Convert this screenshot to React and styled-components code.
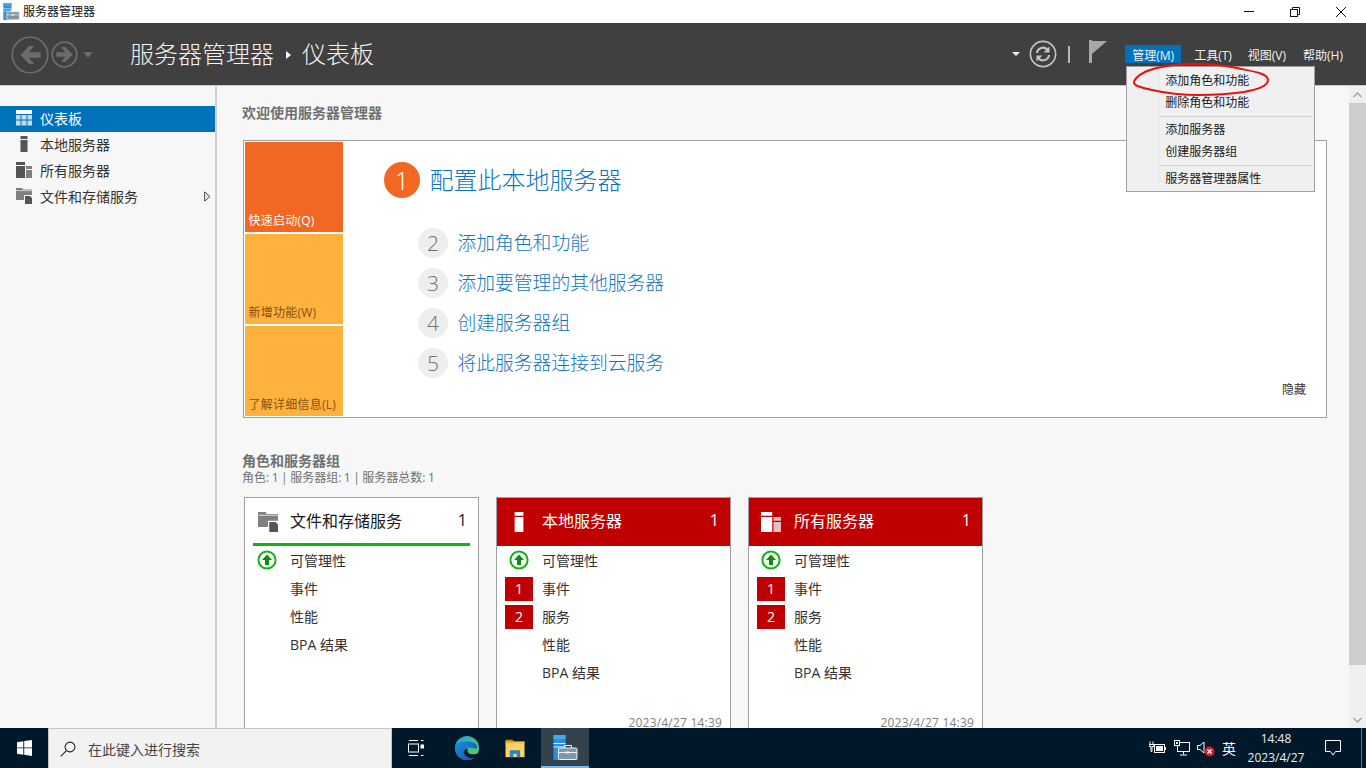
import React from 'react'
import styled, { createGlobalStyle } from 'styled-components'

const fontStack = '"Open Sans", "Noto Sans CJK SC", sans-serif'

const GlobalStyle = createGlobalStyle`
  html, body { margin: 0; padding: 0; background: #f7f7f7; }
  * { box-sizing: border-box; }
  body { font-family: ${fontStack}; font-size: 14px; overflow: hidden; }
`

const Screen = styled.div`
  width: 1366px;
  height: 768px;
  display: flex;
  flex-direction: column;
  overflow: hidden;
`

/* title bar */
const TitleBar = styled.div`
  height: 23px;
  flex: none;
  background: #fff;
  display: flex;
  align-items: center;
  padding-left: 3px;
  font-size: 12px;
  color: #111;
`
const TitleText = styled.span`
  margin-left: 3px;
  margin-top: -1px;
`
const WinButtons = styled.div`
  margin-left: auto;
  display: flex;
  margin-right: 2px;
`
const WinButton = styled.div`
  width: 46px;
  height: 23px;
  display: flex;
  align-items: center;
  justify-content: center;
`

/* dark header */
const Header = styled.div`
  height: 63px;
  flex: none;
  background: #404040;
  border-bottom: 1px solid #c8c8c8;
  display: flex;
  align-items: center;
  color: #fff;
  position: relative;
  z-index: 5;
`
const NavIcons = styled.div`
  display: flex;
  align-items: center;
  margin-left: 11px;
  width: 119px;
  margin-top: 1px;
`
const Crumb = styled.div`
  display: flex;
  align-items: center;
  font-size: 24px;
  font-weight: 300;
  line-height: 32px;
  color: #f4f4f4;
`
const CrumbArrow = styled.span`
  width: 0;
  height: 0;
  margin: 2px 11px 0 12px;
  border-left: 5px solid #fff;
  border-top: 4px solid transparent;
  border-bottom: 4px solid transparent;
`
const Tools = styled.div`
  margin-left: auto;
  display: flex;
  align-items: center;
`
const SmallCaret = styled.span`
  width: 0;
  height: 0;
  margin-right: 9px;
  border-top: 4px solid #eee;
  border-left: 4px solid transparent;
  border-right: 4px solid transparent;
`
const Divider = styled.span`
  width: 2px;
  height: 17px;
  background: #b8b8b8;
  margin: 0 19px 0 11px;
`
const MenuBar = styled.div`
  display: flex;
  margin: 0 17px 0 18px;
  position: relative;
`
const MenuItem = styled.div`
  height: 18px;
  line-height: 22px;
  padding: 0 ${p => (p.$active ? 7 : 6)}px;
  font-size: 12px;
  margin-right: ${p => p.$gap}px;
  white-space: nowrap;
  color: #f2f2f2;
  background: ${p => (p.$active ? '#0072bc' : 'transparent')};
`

/* dropdown menu over the page */
const Dropdown = styled.div`
  position: absolute;
  left: 1px;
  top: 21px;
  width: 189px;
  height: 126px;
  background: #f0f0f0;
  border: 1px solid #a0a0a0;
  padding: 3px 2px 2px 0;
  color: #222;
  font-size: 12px;
  z-index: 10;
`
const GutterLine = styled.div`
  position: absolute;
  left: 31px;
  top: 2px;
  bottom: 8px;
  width: 1px;
  background: #e2e2e2;
`
const DropItem = styled.div`
  height: 22px;
  line-height: 22px;
  padding-left: 38px;
  color: #1a1a1a;
`
const DropSep = styled.div`
  height: 1px;
  margin: 2px 0 2px 33px;
  background: #d4d4d4;
`
const Scribble = styled.svg`
  position: absolute;
  left: 5px;
  top: -5px;
  width: 140px;
  height: 36px;
  overflow: visible;
`

/* body */
const Body = styled.div`
  flex: 1;
  display: flex;
  min-height: 0;
`
const Sidebar = styled.nav`
  width: 217px;
  flex: none;
  background: #f7f7f7;
  border-right: 2px solid #d2d2d2;
  padding-top: 20px;
`
const SideItem = styled.div`
  height: 26px;
  display: flex;
  align-items: center;
  padding: 0 0 2px 16px;
  font-size: 14px;
  color: ${p => (p.$active ? '#fff' : '#333')};
  background: ${p => (p.$active ? '#0072bc' : 'transparent')};
  > svg:first-child { flex: none; margin-right: 8px; }
`
const SideCaret = styled.svg`
  margin-left: auto;
  margin-right: 4px;
`

const Main = styled.main`
  flex: 1;
  min-width: 0;
  background: #f7f7f7;
  padding: 18px 0 0 25px;
  overflow: hidden;
`
const SectionHead = styled.h2`
  margin: ${p => p.$top || 0}px 0 0;
  font-size: 14px;
  line-height: 18px;
  font-weight: 700;
  color: #707070;
`
const SectionSub = styled.div`
  font-size: 12px;
  line-height: 16px;
  word-spacing: -0.6px;
  color: #707070;
`

const Panel = styled.section`
  width: 1084px;
  height: 278px;
  margin: 18px 0 0 1px;
  padding: 1px;
  background: #fff;
  border: 1px solid #a0a0a0;
  display: flex;
`
const TileColumn = styled.div`
  width: 98px;
  flex: none;
  display: flex;
  flex-direction: column;
  gap: 2px;
`
const Tile = styled.div`
  height: 90px;
  background: ${p => (p.$primary ? '#f26722' : '#ffb13d')};
  color: ${p => (p.$primary ? '#fff' : '#8a4f10')};
  font-size: 12px;
  letter-spacing: 0.25px;
  display: flex;
  align-items: flex-end;
  padding: 0 0 3px 3.5px;
  line-height: 16px;
  white-space: nowrap;
`
const Steps = styled.div`
  flex: 1;
  padding: 19px 0 0 41px;
`
const LeadStep = styled.div`
  display: flex;
  align-items: center;
  margin-bottom: 30px;
  color: #0f76bc;
  font-size: 24px;
  font-weight: 300;
`
const StepNum = styled.span`
  flex: none;
  width: ${p => (p.$lead ? 36 : 30)}px;
  height: ${p => (p.$lead ? 36 : 30)}px;
  border-radius: 50%;
  margin-right: 9.5px;
  display: flex;
  align-items: center;
  justify-content: center;
  font-size: ${p => (p.$lead ? 26 : 21)}px;
  font-weight: 300;
  color: ${p => (p.$lead ? '#fff' : '#707070')};
  background: ${p => (p.$lead ? '#f26722' : '#eeeeee')};
`
const SubStep = styled.div`
  display: flex;
  align-items: center;
  height: 30px;
  margin: 0 0 10px 34px;
  font-size: 18.8px;
  font-weight: 300;
  color: #0f76bc;
`
const StepLabel = styled.span`
  margin-bottom: 2px;
`
const HideLink = styled.div`
  align-self: flex-end;
  margin: 0 19px 18px 0;
  font-size: 12px;
  line-height: 16px;
  color: #333;
`

/* role cards */
const CardRow = styled.div`
  display: flex;
  gap: 17px;
  margin: 11px 0 0 2px;
`
const Card = styled.article`
  width: 235px;
  height: 250px;
  flex: none;
  background: #fff;
  border: 1px solid #a0a0a0;
`
const CardHead = styled.div`
  height: 48px;
  display: flex;
  align-items: center;
  font-size: 16px;
  padding: ${p => (p.$alert ? '0 11px 2px 45px' : '0 3px 2px 37px')};
  margin: ${p => (p.$alert ? '0' : '0 8px')};
  color: ${p => (p.$alert ? '#fff' : '#1a1a1a')};
  background: ${p => (p.$alert ? '#c00000' : '#fff')};
  border-bottom: 3px solid ${p => (p.$alert ? '#c00000' : '#0fb50f')};
  position: relative;
  svg { position: absolute; left: ${p => (p.$alert ? 12 : 5)}px; top: 14px; }
`
const CardCount = styled.span`
  margin-left: auto;
`
const CardRows = styled.div`
  padding: 3px 0 0 8px;
  display: flex;
  flex-direction: column;
  gap: 4px;
`
const StatusRow = styled.div`
  height: 24px;
  display: flex;
  align-items: center;
  padding-bottom: 2px;
  font-size: 14px;
  color: #333;
`
const Slot = styled.span`
  flex: none;
  width: 28px;
  height: 24px;
  margin: 2px 9px 0 0;
  padding-bottom: 2px;
  display: flex;
  align-items: center;
  justify-content: center;
  font-size: 14px;
  color: #fff;
  background: ${p => (p.$badge ? '#c00000' : 'transparent')};
`
const Stamp = styled.div`
  margin-top: 26px;
  padding-right: 8px;
  text-align: right;
  font-size: 12px;
  line-height: 16px;
  letter-spacing: 0.2px;
  color: #808080;
`

/* scrollbar */
const ScrollBar = styled.div`
  width: 17px;
  flex: none;
  background: #f0f0f0;
  display: flex;
  flex-direction: column;
`
const ScrollEnd = styled.div`
  height: 17px;
  flex: none;
  display: flex;
  align-items: center;
  justify-content: center;
  margin-top: ${p => (p.$bottom ? 'auto' : 0)};
`
const ScrollThumb = styled.div`
  height: 562px;
  background: #cdcdcd;
`

/* taskbar */
const Taskbar = styled.footer`
  height: 40px;
  flex: none;
  background: #00182a;
  display: flex;
  color: #fff;
`
const StartButton = styled.div`
  width: 48px;
  display: flex;
  align-items: center;
  justify-content: center;
`
const SearchBox = styled.div`
  width: 344px;
  background: #f2f2f2;
  border: 1px solid #c4c4c4;
  border-bottom: none;
  display: flex;
  align-items: center;
  padding-left: 11px;
  font-size: 14px;
  color: #444;
  svg { margin-right: 12px; }
`
const TaskButton = styled.div`
  width: 48px;
  margin-left: ${p => p.$ml || 0}px;
  display: flex;
  align-items: center;
  justify-content: center;
  background: ${p => (p.$active ? '#33434d' : 'transparent')};
  border-bottom: ${p => (p.$active ? '2px solid #76b9ed' : 'none')};
`
const Tray = styled.div`
  margin-left: auto;
  display: flex;
  align-items: center;
`
const TrayIcon = styled.span`
  width: 24px;
  height: 40px;
  display: flex;
  align-items: center;
  justify-content: center;
`
const Ime = styled.span`
  width: 22px;
  text-align: center;
  font-size: 14px;
  margin-right: 6px;
`
const Clock = styled.div`
  width: 60px;
  text-align: center;
  font-size: 12px;
  line-height: 19px;
  color: #eee;
  white-space: nowrap;
`
const Notify = styled.div`
  width: 47px;
  margin-left: 8px;
  height: 40px;
  padding-right: 9px;
  display: flex;
  align-items: center;
  justify-content: center;
`
const ShowDesktop = styled.div`
  width: 5px;
  height: 40px;
  border-left: 1px solid #6b7680;
`

/* drawings */
const DashIcon = () => (
  <svg width="16" height="16" viewBox="0 0 16 16">
    <rect x="0" y="0" width="16" height="4" fill="#fff" />
    <g fill="#bfdcf0">
      <rect x="0" y="5" width="4.5" height="4.5" />
      <rect x="5.5" y="5" width="5" height="4.5" />
      <rect x="11.5" y="5" width="4.5" height="4.5" />
      <rect x="0" y="10.5" width="4.5" height="5" />
      <rect x="5.5" y="10.5" width="5" height="5" />
      <rect x="11.5" y="10.5" width="4.5" height="5" />
    </g>
  </svg>
)
const TowerIcon = ({ color = '#555', size = 16 }) => (
  <svg width={size} height={size} viewBox="0 0 16 16">
    <rect x="4.5" y="0" width="7" height="3" fill={color} />
    <rect x="4.5" y="4" width="7" height="12" fill={color} />
  </svg>
)
const TowersIcon = ({ color = '#555', second = '#808080', size = 16 }) => (
  <svg width={size} height={size} viewBox="0 0 16 16">
    <rect x="0" y="0" width="9" height="3" fill={color} />
    <rect x="0" y="4" width="9" height="12" fill={color} />
    <rect x="10" y="4" width="6" height="3" fill={second} />
    <rect x="10" y="8" width="6" height="8" fill={second} />
  </svg>
)
const FilesIcon = ({ size = 16 }) => (
  <svg width={size} height={size} viewBox="0 0 16 16">
    <path d="M0 0h6l1 1.500h9V7H8v5H0z" fill="#808080" />
    <path d="M0 2.600h16" stroke="#fff" strokeWidth=".6" />
    <path d="M9 8h5l2 2v6H9z" fill="#555" />
  </svg>
)
const ManageIcon = ({ size = 16 }) => (
  <svg width={size} height={size} viewBox="0 0 24 25">
    <rect x="0" y="0" width="12" height="25" fill="#2b8fdc" />
    <rect x="0" y="0" width="12" height="4" fill="#45a8ec" />
    <path d="M0 8.500h12M0 12h12" stroke="#d7ecfb" strokeWidth="1" />
    <rect x="5" y="13" width="18.500" height="11.500" rx="1" fill="#7f95a8" stroke="#e8eef2" strokeWidth="1" />
    <path d="M11 13v-2.500h7V13" fill="none" stroke="#e8eef2" strokeWidth="1" />
    <path d="M5 17.500h18.500" stroke="#e8eef2" strokeWidth="1" />
    <rect x="12" y="16.500" width="4" height="2" fill="#e8eef2" />
  </svg>
)
const UpArrowIcon = () => (
  <svg width="20" height="20" viewBox="0 0 20 20">
    <circle cx="10" cy="10" r="8.600" fill="none" stroke="#0fb50f" strokeWidth="2" />
    <path d="M10 4.500 15 10h-3v5H8v-5H5z" fill="#0a8f0a" />
  </svg>
)
const BackIcon = ({ size }) => (
  <svg width={size} height={size} viewBox="0 0 36 36">
    <circle cx="18" cy="18" r="16.800" fill="none" stroke="#6c6c6c" strokeWidth={size > 30 ? 1.6 : 2.2} />
    <path d="M28 15.500H17l5-6h-5l-8 8.500 8 8.500h5l-5-6h11z" fill="#6c6c6c" />
  </svg>
)
const ForwardIcon = ({ size }) => (
  <svg width={size} height={size} viewBox="0 0 36 36">
    <circle cx="18" cy="18" r="16.400" fill="none" stroke="#6c6c6c" strokeWidth="2.400" />
    <path d="M7 15h12l-5.500-7h5.500L29 18 19 28h-5.500L19 21H7z" fill="#6c6c6c" />
  </svg>
)
const RefreshIcon = () => (
  <svg width="28" height="28" viewBox="0 0 28 28" fill="none">
    <circle cx="14" cy="14" r="12.600" stroke="#c4c4c4" strokeWidth="1.600" />
    <path d="M8 13a6 6 0 0 1 10.400-3.400" stroke="#c4c4c4" strokeWidth="2.200" />
    <path d="M20 15a6 6 0 0 1-10.400 3.400" stroke="#c4c4c4" strokeWidth="2.200" />
    <path d="M20.500 6.500v6h-6z" fill="#c4c4c4" />
    <path d="M7.500 21.500v-6h6z" fill="#c4c4c4" />
  </svg>
)
const FlagIcon = () => (
  <svg width="18" height="23" viewBox="0 0 18 23" style={{ marginTop: -5 }}>
    <rect x="0" y="0" width="3" height="23" fill="#a8a8a8" />
    <path d="M3 1h15L3 14z" fill="#a8a8a8" />
  </svg>
)
const WinLogo = () => (
  <svg width="15" height="16" viewBox="0 0 15 16" fill="#fff">
    <path d="M0 2.200 6.300 1.200V7.400H0zM7.200 1.100 15 0V7.400H7.200zM0 8.300h6.300v6.400L0 13.700zM7.200 8.300H15V16l-7.800-1.200z" />
  </svg>
)
const SearchIcon = () => (
  <svg width="16" height="16" viewBox="0 0 16 16" fill="none" stroke="#222" strokeWidth="1.100">
    <circle cx="10" cy="6" r="4.900" />
    <path d="M6.400 9.600.8 15.400" />
  </svg>
)
const TaskViewIcon = () => (
  <svg width="16" height="16" viewBox="0 0 16 16" fill="none" stroke="#fff" strokeWidth="1">
    <path d="M1 .5h9M1 15.500h9" />
    <rect x=".5" y="4" width="10" height="8" />
    <path d="M13 .5h2.500M13 15.500h2.500" />
    <rect x="13" y="5" width="2.500" height="3" fill="#fff" />
  </svg>
)
const EdgeIcon = () => (
  <svg width="26" height="26" viewBox="0 0 26 26">
    <defs>
      <linearGradient id="edgeTop" x1="0" y1="0" x2="1" y2="1">
        <stop offset="0" stopColor="#1aa0dc" />
        <stop offset="1" stopColor="#5ed65a" />
      </linearGradient>
      <linearGradient id="edgeLow" x1="0" y1="0" x2="1" y2="1">
        <stop offset="0" stopColor="#1e8fe0" />
        <stop offset="1" stopColor="#0f4fa8" />
      </linearGradient>
    </defs>
    <circle cx="13" cy="13" r="12" fill="url(#edgeTop)" />
    <path d="M1 13C1 20 6.500 25 13 25c3 0 5.400-.9 7.400-2.300-4.800 1.400-10.400-1-10.400-5.700 0-2.600 2.200-4.600 5-4.600 2.600 0 5 1.200 6.500 1.200 1.200 0 2-.6 2-1.600C23 9 19 6.600 14 6.600 7 6.600 1 8 1 13z" fill="url(#edgeLow)" />
    <path d="M10 17c0 3.600 3.400 6 7 6 1.200 0 2.400-.2 3.400-.3 2-1.400 3.300-3.200 4-5-2 1.400-5.400 2-8 1.200-3-.9-3.800-3.200-2.200-5.300-2.600.2-4.200 1.600-4.200 3.400z" fill="#00182a" />
  </svg>
)
const ExplorerIcon = () => (
  <svg width="22" height="19" viewBox="0 0 24 22">
    <path d="M1 1h8l2 2H1z" fill="#c98a14" />
    <rect x="1" y="3" width="22" height="18" fill="#ffd45e" />
    <rect x="1" y="3" width="22" height="2" fill="#f2b93c" />
    <path d="M6 21v-8h12v8h-4v-4h-4v4z" fill="#2f7fc4" />
  </svg>
)
const PlugBatteryIcon = () => (
  <svg width="18" height="14" viewBox="0 0 18 14" fill="none" stroke="#fff">
    <rect x="5.500" y="3.500" width="10" height="8" />
    <rect x="7" y="5" width="7" height="5" fill="#fff" stroke="none" />
    <path d="M16.500 6v3" />
    <path d="M1 .5v3M4 .5v3M0 3.500h5v2H3v5H2v-5H0z" />
  </svg>
)
const NetworkIcon = () => (
  <svg width="16" height="16" viewBox="0 0 16 16" fill="none" stroke="#fff">
    <rect x="3.500" y="2.500" width="12" height="9" />
    <path d="M9.500 11.500v3M6 15h7" />
    <rect x=".5" y=".5" width="5" height="5" fill="#00182a" />
    <rect x="2" y="2" width="2" height="2" fill="#fff" stroke="none" />
  </svg>
)
const MutedIcon = () => (
  <svg width="18" height="18" viewBox="0 0 18 18" fill="none">
    <path d="M.5 6.500h2.500L7 3v11L3 10.500H.5z" stroke="#fff" />
    <circle cx="12.500" cy="12.500" r="5" fill="#e81123" />
    <path d="m10.500 10.500 4 4m0-4-4 4" stroke="#fff" strokeWidth="1.500" />
  </svg>
)
const BubbleIcon = () => (
  <svg width="16" height="16" viewBox="0 0 16 16" fill="none" stroke="#fff">
    <path d="M.5.500h15v11h-5L8 15l-2.500-3.500h-5z" />
  </svg>
)
const Chevron = ({ down }) => (
  <svg width="9" height="6" viewBox="0 0 9 6" fill="none" stroke="#a6a6a6" strokeWidth="1.500">
    <path d={down ? 'M.5 1 4.500 5l4-4' : 'M.5 5 4.500 1l4 4'} />
  </svg>
)

const AlertRows = () => (
  <CardRows>
    <StatusRow><Slot><UpArrowIcon /></Slot>可管理性</StatusRow>
    <StatusRow><Slot $badge>1</Slot>事件</StatusRow>
    <StatusRow><Slot $badge>2</Slot>服务</StatusRow>
    <StatusRow><Slot />性能</StatusRow>
    <StatusRow><Slot />BPA 结果</StatusRow>
    <Stamp>2023/4/27 14:39</Stamp>
  </CardRows>
)

const App = () => {
  const steps = [
    [2, '添加角色和功能'],
    [3, '添加要管理的其他服务器'],
    [4, '创建服务器组'],
    [5, '将此服务器连接到云服务'],
  ]

  return (
    <Screen>
      <GlobalStyle />
      <TitleBar>
        <ManageIcon size={17} />
        <TitleText>服务器管理器</TitleText>
        <WinButtons>
          <WinButton>
            <svg width="10" height="10" viewBox="0 0 10 10"><path d="M0 4.500h10" stroke="#111" /></svg>
          </WinButton>
          <WinButton>
            <svg width="10" height="10" viewBox="0 0 10 10" fill="none" stroke="#111">
              <rect x=".5" y="2.500" width="7" height="7" />
              <path d="M2.500 2.500v-2h7v7h-2" />
            </svg>
          </WinButton>
          <WinButton>
            <svg width="10" height="10" viewBox="0 0 10 10"><path d="m0 0 10 10M10 0 0 10" stroke="#111" /></svg>
          </WinButton>
        </WinButtons>
      </TitleBar>

      <Header>
        <NavIcons>
          <BackIcon size={38} />
          <span style={{ width: 2 }} />
          <ForwardIcon size={27} />
          <svg width="10" height="6" viewBox="0 0 10 6" style={{ marginLeft: 5 }}><path d="M0 0h10L5 6z" fill="#6c6c6c" /></svg>
        </NavIcons>
        <Crumb>
          服务器管理器
          <CrumbArrow />
          仪表板
        </Crumb>
        <Tools>
          <SmallCaret />
          <RefreshIcon />
          <Divider />
          <FlagIcon />
          <MenuBar>
            <MenuItem $active $gap={7}>管理(M)</MenuItem>
            <MenuItem $gap={4}>工具(T)</MenuItem>
            <MenuItem $gap={5}>视图(V)</MenuItem>
            <MenuItem $gap={0}>帮助(H)</MenuItem>
            <Dropdown>
              <GutterLine />
              <DropItem>添加角色和功能</DropItem>
              <DropItem>删除角色和功能</DropItem>
              <DropSep />
              <DropItem>添加服务器</DropItem>
              <DropItem>创建服务器组</DropItem>
              <DropSep />
              <DropItem>服务器管理器属性</DropItem>
              <Scribble viewBox="0 0 140 36" fill="none">
                <path
                  d="M25 6C38 3 48 2 60 2c18 0 32 1 45 4 13 3 31 5 31 12 0 6-9 9-24 12-14 2-32 3-45 3-14 0-34-2-47-5-8-2-18-4-18-7 0-4 5-8 11-11 4-2 8-3 12-4z"
                  stroke="#e81010"
                  strokeWidth="2"
                />
              </Scribble>
            </Dropdown>
          </MenuBar>
        </Tools>
      </Header>

      <Body>
        <Sidebar>
          <SideItem $active><DashIcon />仪表板</SideItem>
          <SideItem><TowerIcon />本地服务器</SideItem>
          <SideItem><TowersIcon />所有服务器</SideItem>
          <SideItem>
            <FilesIcon />文件和存储服务
            <SideCaret width="7" height="11" viewBox="0 0 7 11">
              <path d="M.7.9v9.200L6 5.500z" fill="#f7f7f7" stroke="#444" />
            </SideCaret>
          </SideItem>
        </Sidebar>

        <Main>
          <SectionHead>欢迎使用服务器管理器</SectionHead>
          <Panel>
            <TileColumn>
              <Tile $primary>快速启动(Q)</Tile>
              <Tile>新增功能(W)</Tile>
              <Tile>了解详细信息(L)</Tile>
            </TileColumn>
            <Steps>
              <LeadStep><StepNum $lead>1</StepNum><StepLabel>配置此本地服务器</StepLabel></LeadStep>
              {steps.map(([n, label]) => (
                <SubStep key={n}><StepNum>{n}</StepNum><StepLabel>{label}</StepLabel></SubStep>
              ))}
            </Steps>
            <HideLink>隐藏</HideLink>
          </Panel>

          <SectionHead $top={34}>角色和服务器组</SectionHead>
          <SectionSub>角色: 1 | 服务器组: 1 | 服务器总数: 1</SectionSub>

          <CardRow>
            <Card>
              <CardHead>
                <FilesIcon size={20} />
                文件和存储服务
                <CardCount>1</CardCount>
              </CardHead>
              <CardRows>
                <StatusRow><Slot><UpArrowIcon /></Slot>可管理性</StatusRow>
                <StatusRow><Slot />事件</StatusRow>
                <StatusRow><Slot />性能</StatusRow>
                <StatusRow><Slot />BPA 结果</StatusRow>
              </CardRows>
            </Card>
            <Card>
              <CardHead $alert>
                <TowerIcon color="#fff" size={20} />
                本地服务器
                <CardCount>1</CardCount>
              </CardHead>
              <AlertRows />
            </Card>
            <Card>
              <CardHead $alert>
                <TowersIcon color="#fff" second="#edbcbc" size={20} />
                所有服务器
                <CardCount>1</CardCount>
              </CardHead>
              <AlertRows />
            </Card>
          </CardRow>
        </Main>

        <ScrollBar>
          <ScrollEnd><Chevron /></ScrollEnd>
          <ScrollThumb />
          <ScrollEnd $bottom><Chevron down /></ScrollEnd>
        </ScrollBar>
      </Body>

      <Taskbar>
        <StartButton><WinLogo /></StartButton>
        <SearchBox><SearchIcon />在此键入进行搜索</SearchBox>
        <TaskButton><TaskViewIcon /></TaskButton>
        <TaskButton $ml={3}><EdgeIcon /></TaskButton>
        <TaskButton><ExplorerIcon /></TaskButton>
        <TaskButton $ml={2} $active><ManageIcon size={25} /></TaskButton>
        <Tray>
          <TrayIcon><PlugBatteryIcon /></TrayIcon>
          <TrayIcon><NetworkIcon /></TrayIcon>
          <TrayIcon><MutedIcon /></TrayIcon>
          <Ime>英</Ime>
          <Clock>14:48<br />2023/4/27</Clock>
          <Notify><BubbleIcon /></Notify>
          <ShowDesktop />
        </Tray>
      </Taskbar>
    </Screen>
  )
}

export default App
